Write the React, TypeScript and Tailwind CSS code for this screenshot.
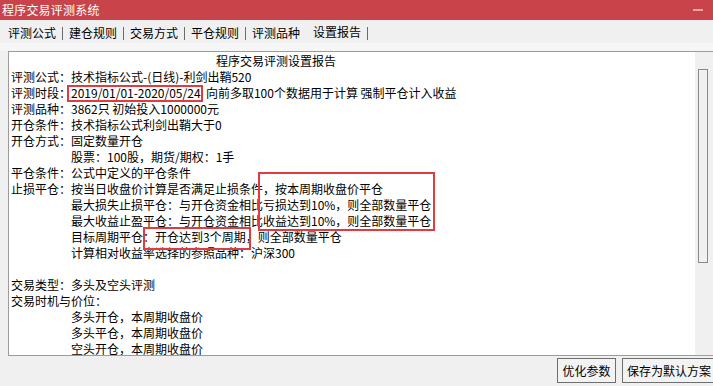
const TABS = ["评测公式", "建仓规则", "交易方式", "平仓规则", "评测品种", "设置报告"];

type Line = { label?: string; text: string; indent?: boolean };

const LINES: Line[] = [
  { label: "评测公式：", text: "技术指标公式-(日线)-利剑出鞘520" },
  { label: "评测时段：", text: "2019/01/01-2020/05/24\u00a0\u00a0向前多取100个数据用于计算 强制平仓计入收益" },
  { label: "评测品种：", text: "3862只 初始投入1000000元" },
  { label: "开仓条件：", text: "技术指标公式利剑出鞘大于0" },
  { label: "开仓方式：", text: "固定数量开仓" },
  { indent: true, text: "股票：100股，期货/期权：1手" },
  { label: "平仓条件：", text: "公式中定义的平仓条件" },
  { label: "止损平仓：", text: "按当日收盘价计算是否满足止损条件，按本周期收盘价平仓" },
  { indent: true, text: "最大损失止损平仓：与开仓资金相比亏损达到10%，则全部数量平仓" },
  { indent: true, text: "最大收益止盈平仓：与开仓资金相比收益达到10%，则全部数量平仓" },
  { indent: true, text: "目标周期平仓：开仓达到3个周期，则全部数量平仓" },
  { indent: true, text: "计算相对收益率选择的参照品种：沪深300" },
  { text: "" },
  { label: "交易类型：", text: "多头及空头评测" },
  { label: "交易时机与价位：", text: "" },
  { indent: true, text: "多头开仓，本周期收盘价" },
  { indent: true, text: "多头平仓，本周期收盘价" },
  { indent: true, text: "空头开仓，本周期收盘价" },
];

// red annotation frames drawn over the report, page coordinates
const MARKS = [
  { key: "period", cls: "left-[67px] top-[85px] w-[136px] h-[17px]" },
  { key: "close", cls: "left-[258px] top-[172px] w-[177px] h-[59px]" },
  { key: "target", cls: "left-[143px] top-[227px] w-[108px] h-[23px]" },
];

export default function App() {
  return (
    <div
      className="relative flex h-[386px] w-[713px] flex-col overflow-hidden bg-[#f0f0f0] text-black"
      style={{ fontFamily: '"Noto Sans CJK SC", "Noto Sans", sans-serif' }}
    >
      {/* title bar */}
      <div className="flex h-[20px] shrink-0 items-center justify-between bg-[#c9434a] pl-[2px] pr-[10px]">
        <span className="text-[12px] leading-none tracking-[0.2px] text-white">程序交易评测系统</span>
        <span className="h-[2px] w-[10px] bg-[#f2a5a8]" />
      </div>

      {/* tabs */}
      <div className="flex h-[23px] shrink-0 items-center pl-[2px] pt-[3px]">
        {TABS.map((t, i) => (
          <div key={t} className="flex items-center">
            <div className={`flex w-[60px] justify-center text-[12px] leading-none ${i === 5 ? "-mt-[2px]" : ""}`}>
              {t}
            </div>
            {i !== 4 ? <div className="h-[13px] w-[1px] bg-[#6b6b6b]" /> : <div className="w-[1px]" />}
          </div>
        ))}
      </div>

      {/* tab page */}
      <div className="flex shrink-0 flex-col bg-[#f0f0f0] pl-[8px]">
        <div className="h-[8px] bg-[#f6f6f6] -ml-[8px]" />
        <div className="-mr-[4px] flex h-[305px] border border-[#9b9b9b] bg-white">
          <div className="flex-1 overflow-hidden pl-[2px] pt-[1px] text-[12px] leading-[16px]">
            <div className="h-[16px] pl-[205px]">程序交易评测设置报告</div>
            {LINES.map((l, i) => (
              <div key={i} className="flex h-[16px] whitespace-nowrap">
                {l.indent ? <span className="w-[60px] shrink-0" /> : null}
                {l.label ? <span className="shrink-0">{l.label}</span> : null}
                <span>{l.text}</span>
              </div>
            ))}
          </div>
          <div className="relative w-[21px] shrink-0 bg-[#f0f0f0]">
            <div className="absolute left-[3px] top-[17px] h-[194px] w-[10px] border border-[#8a8a8a] bg-[#f0f0f0]" />
          </div>
        </div>
      </div>

      {/* buttons */}
      <div className="-mr-[6px] flex flex-1 items-center justify-end gap-[6px] pb-[1px]">
        <button className="h-[25px] w-[59px] border border-[#6f6f6f] bg-[#f3f3f3] text-[12px] leading-none">
          优化参数
        </button>
        <button className="h-[25px] w-[97px] border border-[#6f6f6f] bg-[#f3f3f3] pl-[4px] text-left text-[12px] leading-none">
          保存为默认方案
        </button>
      </div>

      {MARKS.map((m) => (
        <div key={m.key} className={`pointer-events-none absolute border-2 border-[#e23b3f] ${m.cls}`} />
      ))}
    </div>
  );
}
